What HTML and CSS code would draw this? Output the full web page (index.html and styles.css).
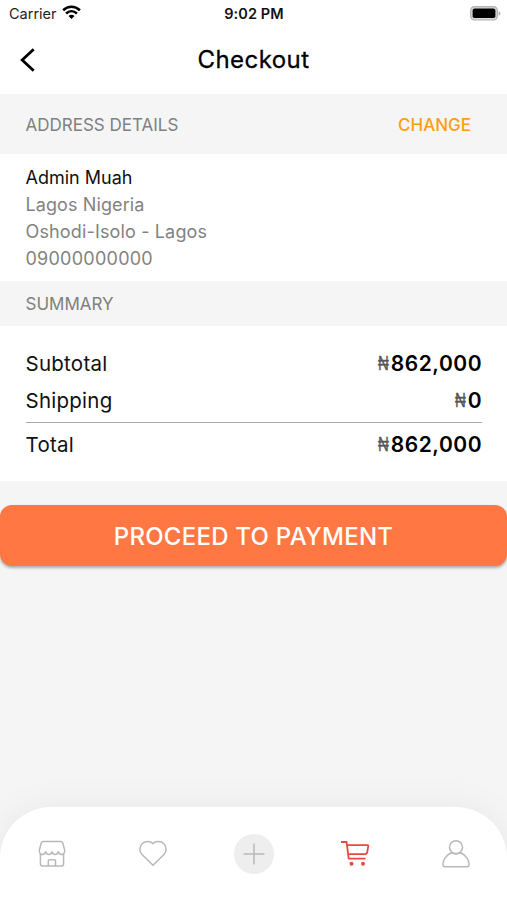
FILE: index.html
```html
<!DOCTYPE html>
<html lang="en">
<head>
<meta charset="utf-8">
<title>Checkout</title>
<link rel="stylesheet" href="styles.css">
</head>
<body>
<div class="screen">
  <div class="status">
    <div class="carrier"><span>Carrier</span>
      <svg width="19" height="15" viewBox="0 0 19 15" fill="none" stroke="#000" stroke-width="2.6"><path d="M1.1 5.3C6 .6 13 .6 17.9 5.3"/><path d="M4.1 8.5c3.2-3 7.6-3 10.8 0"/><path d="M6.5 10.9c1.8-1.6 4.2-1.6 6 0L9.5 14z" fill="#000" stroke="none"/></svg>
    </div>
    <span class="clock">9:02 PM</span>
    <svg class="battery" width="31" height="15" viewBox="0 0 31 15"><rect x=".7" y=".7" width="26.6" height="13.2" rx="3.8" fill="#ddd" stroke="#b5b5b5" stroke-width="1.4"/><rect x="2.6" y="2.6" width="22.8" height="9.4" rx="1.8"/><path d="M28.7 5.3c2.2.7 2.2 3.7 0 4.4z" fill="#aaa"/></svg>
  </div>
  <header class="header">
    <svg class="back" width="16" height="24" viewBox="0 0 16 24" fill="none" stroke="#000" stroke-width="2.8"><path d="M13.7 1.2 2.2 12l11.5 10.8"/></svg>
    <h1>Checkout</h1>
  </header>
  <div class="band band-address"><span class="t-address">ADDRESS DETAILS</span><a class="change">CHANGE</a></div>
  <section class="address">
    <p class="name">Admin Muah</p>
    <p class="city">Lagos Nigeria</p>
    <p class="area">Oshodi-Isolo - Lagos</p>
    <p class="phone">09000000000</p>
  </section>
  <div class="band band-summary"><span class="t-summary">SUMMARY</span></div>
  <section class="summary">
    <div class="row"><span>Subtotal</span><span class="amount"><i>₦</i><b>862,000</b></span></div>
    <div class="row"><span>Shipping</span><span class="amount"><i>₦</i><b>0</b></span></div>
    <div class="row total"><span>Total</span><span class="amount"><i>₦</i><b>862,000</b></span></div>
  </section>
  <button class="pay">PROCEED TO PAYMENT</button>
  <nav class="nav">
    <a><svg width="28" height="28" viewBox="0 0 28 28"><path d="M5.2 1.5h17.6q1.7 0 2.1 1.7l1.8 7.3q0 4-3.2 4-2.4 0-3.2-2.7-.9 2.7-3.2 2.7T14 11.8q-.9 2.7-3.1 2.7t-3.2-2.7q-.8 2.7-3.2 2.7-3.2 0-3.2-4l1.8-7.3q.4-1.7 2.1-1.7zM2.4 14v9.4q0 2.7 2.7 2.7h17.8q2.7 0 2.7-2.7V14M10.3 26v-5.1q0-1.2 1.2-1.2h4.8q1.2 0 1.2 1.2V26"/></svg></a>
    <a><svg width="28" height="28" viewBox="0 0 28 28"><path d="M14 25.3 2.8 14.2C-.5 10.8.7 3.4 6.7 1.8 9.8 1 12.4 1.9 14 3.7c1.6-1.8 4.2-2.7 7.3-1.9 6 1.6 7.2 9 3.9 12.4z"/></svg></a>
    <a class="add"><svg width="22" height="22" viewBox="0 0 22 22"><path d="M11 .6v20.8M.6 11h20.8"/></svg></a>
    <a class="cart"><svg width="30" height="28" viewBox="0 0 30 28"><path d="M1 2h5.6l2.1 16.6h16.8M7 5.1h20.5q1 0 .8 1.1L27.1 12.8q-.3 1.4-1.8 1.4H8.3"/><circle cx="11.5" cy="23.8" r="2"/><circle cx="23" cy="23.8" r="2"/></svg></a>
    <a><svg width="28" height="28" viewBox="0 0 28 28"><circle cx="14" cy="7.2" r="6.5"/><path d="M9.3 12.7C4.4 14.8 1 19.9.9 24.6q0 2.1 2.1 2.1h22q2.1 0 2.1-2.1c-.1-4.7-3.5-9.8-8.4-11.9-2.6 1.3-6.8 1.3-9.4 0z"/></svg></a>
  </nav>
</div>
</body>
</html>
```

FILE: styles.css
```css
* { box-sizing: border-box; }
body { margin: 0; font-family: Inter, "Liberation Sans", sans-serif; }
h1, p { margin: 0; font-weight: 400; }
.screen { width: 507px; height: 900px; display: flex; flex-direction: column; background: #f5f5f5; overflow: hidden; }
.status { flex: none; height: 27px; background: #fff; display: grid; grid-template-columns: 1fr auto 1fr; align-items: center; padding: 0 6px 0 9px; font-size: 14.5px; }
.carrier { display: flex; align-items: center; gap: 5px; color: #222; }
.carrier svg { margin-top: -2px; }
.clock { font-weight: 600; color: #111; padding-right: 2px; letter-spacing: .1px; }
.battery { justify-self: end; margin-top: -1px; }
.header { flex: none; height: 67px; background: #fff; display: grid; grid-template-columns: 40px 1fr 40px; align-items: center; padding: 0 20px 2px; }
h1 { font-size: 24px; text-align: center; letter-spacing: .45px; -webkit-text-stroke: .3px #000; }
.band { flex: none; display: flex; align-items: center; justify-content: space-between; padding: 0 36px 0 25.5px; font-size: 17px; color: #808080; }
.band-address { height: 60px; padding-top: 1px; }
.band-summary { height: 45px; }
.change { color: #ff9d12; font-weight: 500; }
.address { flex: none; height: 127px; background: #fff; padding: 10px 25.5px; font-size: 18px; line-height: 27px; color: #828282; }
.name { color: #111; letter-spacing: 0; }
.city { letter-spacing: .1px; }
.area { letter-spacing: .15px; }
.phone { letter-spacing: .25px; }
.summary { flex: none; height: 155px; background: #fff; padding: 19px 25px 0 25.5px; font-size: 20.5px; letter-spacing: .25px; color: #111; }
.row { height: 37px; display: flex; align-items: center; justify-content: space-between; }
.total { height: 44px; margin-top: 3px; border-top: 1px solid #aaa; }
.amount { display: flex; align-items: center; }
.amount b { font-weight: 600; font-size: 21px; letter-spacing: .5px; color: #000; }
.amount i { font: 400 20px "Liberation Sans", sans-serif; color: #555; -webkit-text-stroke: .3px #555; width: 15px; display: flex; justify-content: center; transform: scaleX(.75); }
.pay { flex: none; height: 61px; margin-top: 24px; padding-top: 3px; border: 0; border-radius: 12px; background: #ff7742; color: #fff; font: 500 24px Inter, sans-serif; letter-spacing: .25px; box-shadow: 0 2px 3px rgba(0,0,0,.3); }
.nav { flex: none; height: 93px; margin-top: auto; background: #fff; border-radius: 51px 51px 0 0; display: grid; grid-template-columns: repeat(5, 1fr); justify-items: center; align-items: center; padding-left: 1px; box-shadow: 0 0 36px rgba(0,0,0,.06); }
.nav a { display: flex; align-items: center; justify-content: center; width: 40px; height: 40px; border-radius: 50%; }
.nav svg { fill: none; stroke: #b9b9b9; stroke-width: 1.5; stroke-linejoin: round; }
.nav .add { background: #eee; }
.nav .cart svg { stroke: #e64a3f; stroke-width: 1.8; }
.nav .cart circle { fill: #e64a3f; stroke: none; }
```
